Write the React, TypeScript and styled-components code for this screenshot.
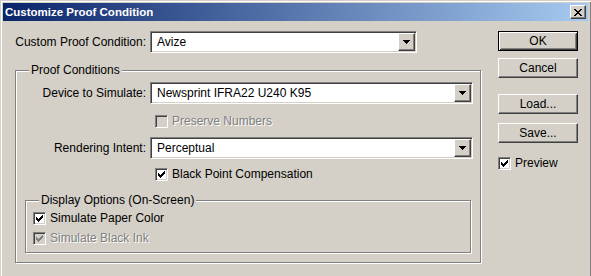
import React from "react";
import styled, { createGlobalStyle, css } from "styled-components";

const GlobalStyle = createGlobalStyle`
  html, body {
    margin: 0;
    padding: 0;
    background: #d4d0c8;
  }
  body {
    font-family: "Liberation Sans", Arial, sans-serif;
    font-size: 12px;
    color: #000;
  }
`;

const Window = styled.div`
  width: 591px;
  height: 276px;
  box-sizing: border-box;
  overflow: hidden;
  background: #d4d0c8;
  padding: 3px 3px 0 3px;
  box-shadow: inset 1px 1px 0 #d4d0c8, inset 2px 2px 0 #fff, inset -1px 0 0 #808080;
  display: flex;
  flex-direction: column;
`;

const TitleBar = styled.div`
  height: 18px;
  display: flex;
  align-items: center;
  justify-content: space-between;
  padding: 0 2px;
  background: linear-gradient(to right, #0a246a, #a6caf0);
`;

const Title = styled.span`
  color: #fff;
  font-weight: bold;
  font-size: 11.5px;
  white-space: nowrap;
`;

const raised = css`
  border: 1px solid;
  border-color: #fff #404040 #404040 #fff;
  box-shadow: inset -1px -1px 0 #808080, inset 1px 1px 0 #d4d0c8;
  background: #d4d0c8;
`;

const CloseButton = styled.div`
  ${raised};
  box-sizing: border-box;
  width: 16px;
  height: 14px;
  display: flex;
  align-items: center;
  justify-content: center;
`;

const Body = styled.div`
  display: flex;
  padding: 10px 0 0 12px;
`;

const MainColumn = styled.div`
  width: 466px;
  display: flex;
  flex-direction: column;
`;

const FieldRow = styled.div<{ $mt?: number }>`
  display: flex;
  align-items: center;
  gap: 4px;
  margin-top: ${(p) => p.$mt ?? 0}px;
`;

const FieldLabel = styled.div<{ $width: number }>`
  width: ${(p) => p.$width}px;
  flex-shrink: 0;
  display: flex;
  justify-content: flex-end;
  white-space: nowrap;
`;

const sunken = css`
  border: 1px solid;
  border-color: #808080 #fff #fff #808080;
  box-shadow: inset 1px 1px 0 #404040, inset -1px -1px 0 #d4d0c8;
`;

const SelectBox = styled.div<{ $width: number }>`
  ${sunken};
  width: ${(p) => p.$width}px;
  flex-shrink: 0;
  height: 22px;
  box-sizing: border-box;
  padding: 1px;
  background: #fff;
  display: flex;
`;

const SelectValue = styled.div`
  flex: 1;
  padding-left: 5px;
  line-height: 18px;
  white-space: nowrap;
`;

const DropButton = styled.div`
  ${raised};
  box-sizing: border-box;
  width: 17px;
  height: 18px;
  display: flex;
  align-items: center;
  justify-content: center;
`;

const GroupBox = styled.div<{ $padLeft: number; $padRight: number; $padBottom: number; $mt?: number }>`
  border: 1px solid #808080;
  box-shadow: inset 1px 1px 0 #fff, 1px 1px 0 #fff;
  display: flex;
  flex-direction: column;
  padding: 0 ${(p) => p.$padRight}px ${(p) => p.$padBottom}px ${(p) => p.$padLeft}px;
  margin-top: ${(p) => p.$mt ?? 0}px;
`;

const GroupLabel = styled.div<{ $padLeft: number }>`
  align-self: flex-start;
  height: 15px;
  line-height: 15px;
  margin: -8px 0 0 ${(p) => 13 - p.$padLeft}px;
  padding: 0 2px;
  background: #d4d0c8;
  white-space: nowrap;
`;

const CheckRow = styled.div<{ $mt?: number; $indent?: number }>`
  display: flex;
  align-items: center;
  gap: 4px;
  height: 13px;
  margin-top: ${(p) => p.$mt ?? 0}px;
  margin-left: ${(p) => p.$indent ?? 0}px;
`;

const CheckBox = styled.div<{ $disabled?: boolean }>`
  ${sunken};
  box-sizing: border-box;
  width: 13px;
  height: 13px;
  flex-shrink: 0;
  background: ${(p) => (p.$disabled ? "#d4d0c8" : "#fff")};
  position: relative;
`;

const CheckText = styled.span<{ $disabled?: boolean }>`
  line-height: 13px;
  white-space: nowrap;
  color: ${(p) => (p.$disabled ? "#808080" : "#000")};
  text-shadow: ${(p) => (p.$disabled ? "1px 1px 0 #fff" : "none")};
`;

const ButtonColumn = styled.div`
  display: flex;
  flex-direction: column;
  margin-left: 17px;
  width: 80px;
`;

const PushButton = styled.div<{ $mt?: number; $default?: boolean }>`
  box-sizing: border-box;
  height: 20px;
  margin-top: ${(p) => p.$mt ?? 0}px;
  display: flex;
  align-items: center;
  justify-content: center;
  background: #d4d0c8;
  ${(p) =>
    p.$default
      ? css`
          border: 1px solid #000;
          box-shadow: inset 1px 1px 0 #fff, inset -1px -1px 0 #404040, inset 2px 2px 0 #d4d0c8,
            inset -2px -2px 0 #808080;
        `
      : raised};
`;

const CheckMark = ({ color }: { color: string }) => (
  <svg
    width="7"
    height="7"
    viewBox="0 0 7 7"
    shapeRendering="crispEdges"
    style={{ position: "absolute", left: 2, top: 2 }}
  >
    <path
      fill={color}
      d="M6 0h1v1H6z M5 1h2v1H5z M0 2h1v1H0z M4 2h3v1H4z M0 3h2v1H0z M3 3h3v1H3z M0 4h5v1H0z M1 5h3v1H1z M2 6h1v1H2z"
    />
  </svg>
);

const Arrow = () => (
  <svg width="7" height="4" viewBox="0 0 7 4" shapeRendering="crispEdges">
    <path fill="#000" d="M0 0h7v1H0z M1 1h5v1H1z M2 2h3v1H2z M3 3h1v1H3z" />
  </svg>
);

const CloseGlyph = () => (
  <svg width="8" height="7" viewBox="0 0 8 7" shapeRendering="crispEdges">
    <path
      fill="#000"
      d="M0 0h2v1H0z M6 0h2v1H6z M1 1h2v1H1z M5 1h2v1H5z M2 2h4v1H2z M3 3h2v1H3z M2 4h4v1H2z M1 5h2v1H1z M5 5h2v1H5z M0 6h2v1H0z M6 6h2v1H6z"
    />
  </svg>
);

const Select = ({ width, value }: { width: number; value: string }) => (
  <SelectBox $width={width}>
    <SelectValue>{value}</SelectValue>
    <DropButton>
      <Arrow />
    </DropButton>
  </SelectBox>
);

const Check = ({
  label,
  checked,
  disabled,
  mt,
  indent,
}: {
  label: string;
  checked?: boolean;
  disabled?: boolean;
  mt?: number;
  indent?: number;
}) => (
  <CheckRow $mt={mt} $indent={indent}>
    <CheckBox $disabled={disabled}>{checked && <CheckMark color={disabled ? "#808080" : "#000"} />}</CheckBox>
    <CheckText $disabled={disabled}>{label}</CheckText>
  </CheckRow>
);

export default function App() {
  return (
    <>
      <GlobalStyle />
      <Window>
        <TitleBar>
          <Title>Customize Proof Condition</Title>
          <CloseButton>
            <CloseGlyph />
          </CloseButton>
        </TitleBar>
        <Body>
          <MainColumn>
            <FieldRow>
              <FieldLabel $width={131}>Custom Proof Condition:</FieldLabel>
              <Select width={267} value="Avize" />
            </FieldRow>
            <GroupBox $padLeft={9} $padRight={9} $padBottom={9} $mt={17}>
              <GroupLabel $padLeft={9}>Proof Conditions</GroupLabel>
              <FieldRow $mt={4}>
                <FieldLabel $width={121}>Device to Simulate:</FieldLabel>
                <Select width={323} value="Newsprint IFRA22 U240 K95" />
              </FieldRow>
              <Check label="Preserve Numbers" disabled mt={11} indent={130} />
              <FieldRow $mt={9}>
                <FieldLabel $width={121}>Rendering Intent:</FieldLabel>
                <Select width={323} value="Perceptual" />
              </FieldRow>
              <Check label="Black Point Compensation" checked mt={9} indent={130} />
              <GroupBox $padLeft={7} $padRight={7} $padBottom={7} $mt={19}>
                <GroupLabel $padLeft={7}>Display Options (On-Screen)</GroupLabel>
                <Check label="Simulate Paper Color" checked mt={4} />
                <Check label="Simulate Black Ink" checked disabled mt={7} />
              </GroupBox>
            </GroupBox>
          </MainColumn>
          <ButtonColumn>
            <PushButton $default>OK</PushButton>
            <PushButton $mt={7}>Cancel</PushButton>
            <PushButton $mt={16}>Load...</PushButton>
            <PushButton $mt={9}>Save...</PushButton>
            <Check label="Preview" checked mt={14} />
          </ButtonColumn>
        </Body>
      </Window>
    </>
  );
}
